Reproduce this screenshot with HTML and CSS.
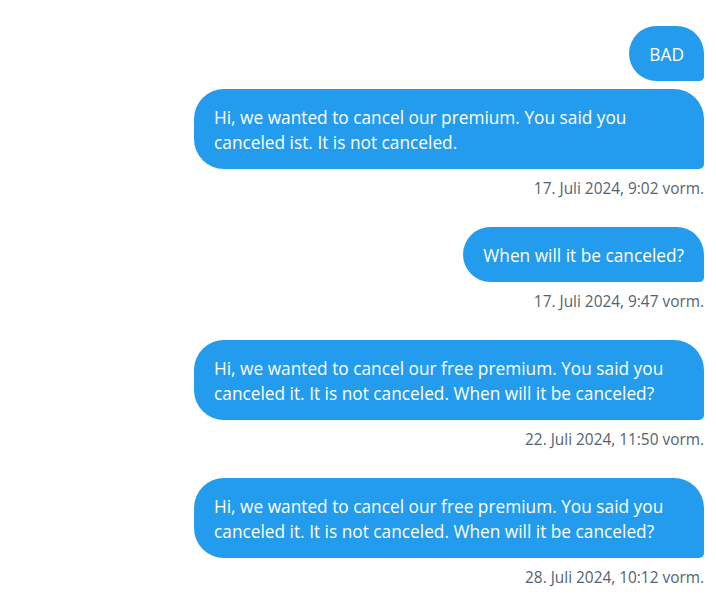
FILE: index.html
```html
<!DOCTYPE html>
<html>
<head>
<meta charset="utf-8">
<link rel="stylesheet" href="styles.css">
</head>
<body>
<div class="chat">
  <div class="group">
    <div class="bubble">BAD</div>
    <div class="bubble">Hi, we wanted to cancel our premium. You said you canceled ist. It is not canceled.</div>
    <div class="time">17. Juli 2024, 9:02 vorm.</div>
  </div>
  <div class="group">
    <div class="bubble">When will it be canceled?</div>
    <div class="time">17. Juli 2024, 9:47 vorm.</div>
  </div>
  <div class="group">
    <div class="bubble">Hi, we wanted to cancel our free premium. You said you canceled it. It is not canceled. When will it be canceled?</div>
    <div class="time">22. Juli 2024, 11:50 vorm.</div>
  </div>
  <div class="group">
    <div class="bubble">Hi, we wanted to cancel our free premium. You said you canceled it. It is not canceled. When will it be canceled?</div>
    <div class="time">28. Juli 2024, 10:12 vorm.</div>
  </div>
</div>
</body>
</html>
```
FILE: styles.css
```css
html, body {
  margin: 0;
  padding: 0;
  background: #ffffff;
}
body {
  font-family: "Open Sans", "Noto Sans", sans-serif;
}
.chat {
  display: flex;
  flex-direction: column;
  gap: 28px;
  padding: 26px 12px 0 0;
}
.group {
  display: flex;
  flex-direction: column;
  align-items: flex-end;
  gap: 8px;
}
.bubble {
  background: #239cee;
  color: #ffffff;
  font-size: 17.3px;
  line-height: 25px;
  padding: 16px 20px 14px;
  border-radius: 30px 30px 5px 30px;
  max-width: 470px;
}
.time {
  font-size: 15.4px;
  line-height: 20px;
  margin-top: 2px;
  color: #536471;
}
```
